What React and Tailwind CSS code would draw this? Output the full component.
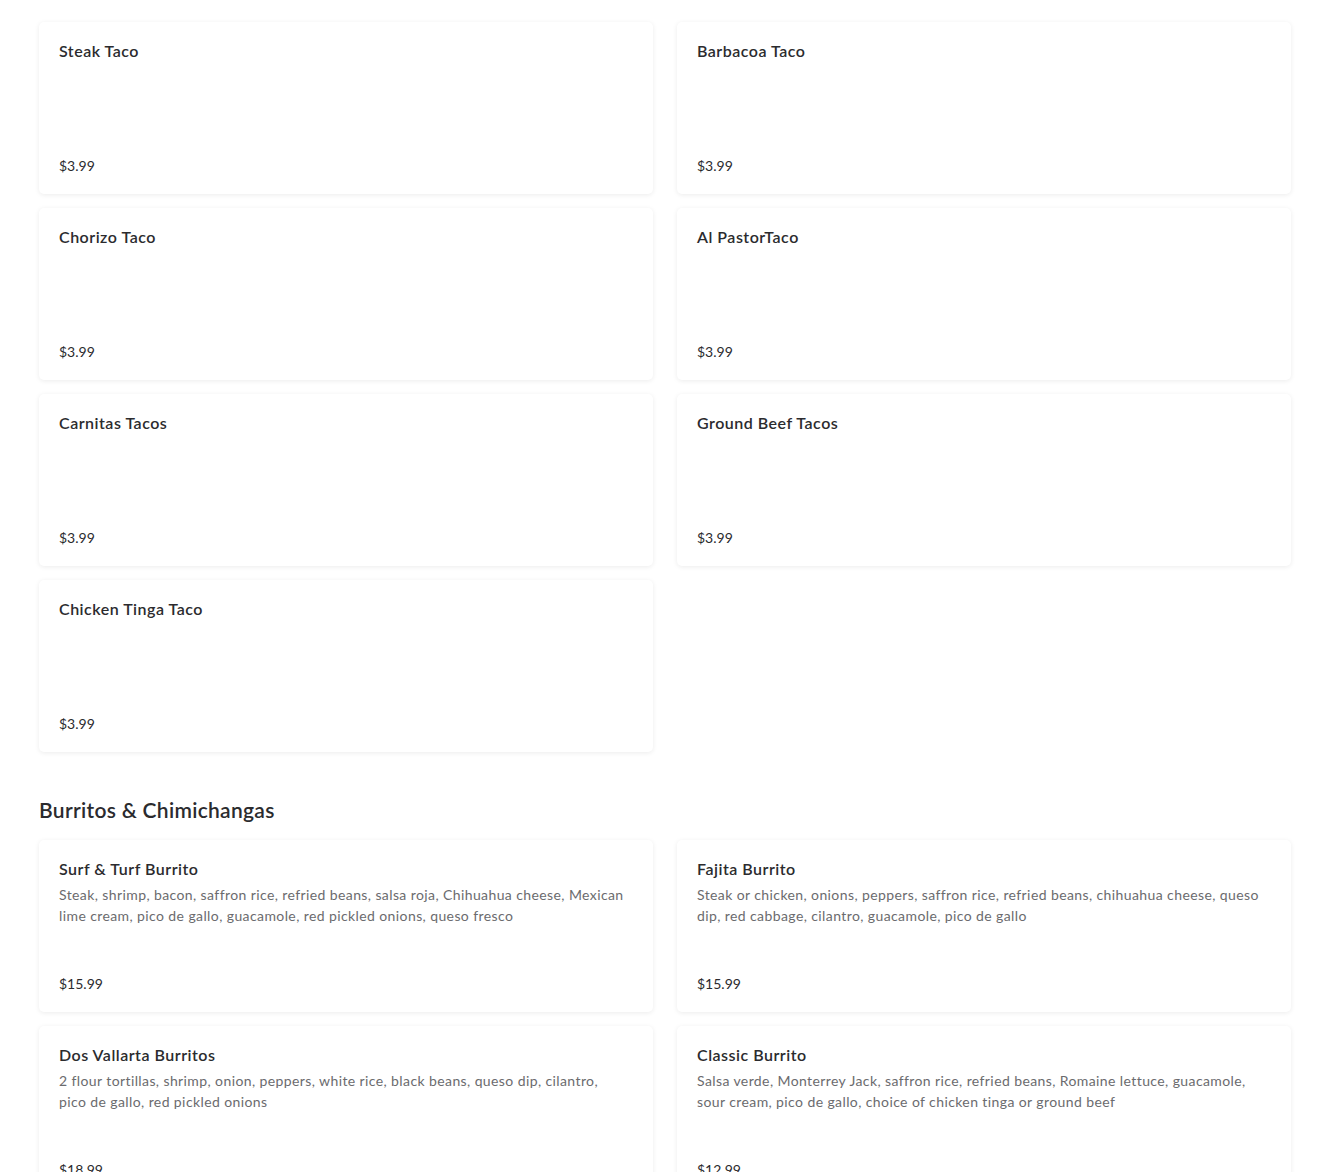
import React from "react";

const tacos = [
  { name: "Steak Taco", price: "$3.99" },
  { name: "Barbacoa Taco", price: "$3.99" },
  { name: "Chorizo Taco", price: "$3.99" },
  { name: "Al PastorTaco", price: "$3.99" },
  { name: "Carnitas Tacos", price: "$3.99" },
  { name: "Ground Beef Tacos", price: "$3.99" },
  { name: "Chicken Tinga Taco", price: "$3.99" },
];

const burritos = [
  {
    name: "Surf & Turf Burrito",
    desc: "Steak, shrimp, bacon, saffron rice, refried beans, salsa roja, Chihuahua cheese, Mexican lime cream, pico de gallo, guacamole, red pickled onions, queso fresco",
    price: "$15.99",
  },
  {
    name: "Fajita Burrito",
    desc: "Steak or chicken, onions, peppers, saffron rice, refried beans, chihuahua cheese, queso dip, red cabbage, cilantro, guacamole, pico de gallo",
    price: "$15.99",
  },
  {
    name: "Dos Vallarta Burritos",
    desc: "2 flour tortillas, shrimp, onion, peppers, white rice, black beans, queso dip, cilantro, pico de gallo, red pickled onions",
    price: "$18.99",
  },
  {
    name: "Classic Burrito",
    desc: "Salsa verde, Monterrey Jack, saffron rice, refried beans, Romaine lettuce, guacamole, sour cream, pico de gallo, choice of chicken tinga or ground beef",
    price: "$12.99",
  },
];

function Card({ item }) {
  return (
    <div className="h-[172px] flex flex-col rounded-[5px] bg-white shadow-[0_1px_5px_rgba(0,0,0,0.08)] px-5 pt-[19px] pb-[18px]">
      <div className="text-[16px] leading-5 font-semibold text-[#2b2b2e] tracking-[0.5px]">{item.name}</div>
      {item.desc && (
        <p className="mt-[5px] pr-1 text-[14px] leading-[21px] text-[#6b6b6e] tracking-[0.4px]">{item.desc}</p>
      )}
      <div className="mt-auto text-[14px] leading-5 text-[#2b2b2e]">{item.price}</div>
    </div>
  );
}

export default function App() {
  return (
    <div className="min-h-screen bg-white px-[39px] pb-10 overflow-hidden" style={{ fontFamily: "Lato, 'Noto Sans', sans-serif" }}>
      <h2 className="-mt-[23px] text-[21px] leading-7 font-semibold text-[#2b2b2e] tracking-[0.3px]">Tacos</h2>
      <div className="mt-[17px] grid grid-cols-2 gap-x-6 gap-y-[14px]">
        {tacos.map((t) => (
          <Card key={t.name} item={t} />
        ))}
      </div>
      <h2 className="mt-[44px] text-[21px] leading-7 font-semibold text-[#2b2b2e] tracking-[0.3px]">Burritos &amp; Chimichangas</h2>
      <div className="mt-4 grid grid-cols-2 gap-x-6 gap-y-[14px]">
        {burritos.map((t) => (
          <Card key={t.name} item={t} />
        ))}
      </div>
    </div>
  );
}
